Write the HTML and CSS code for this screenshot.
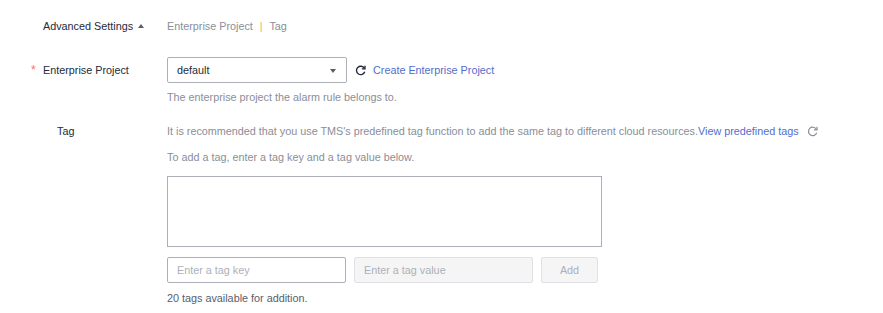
FILE: index.html
```html
<!DOCTYPE html>
<html>
<head>
<meta charset="utf-8">
<link rel="stylesheet" href="styles.css">
</head>
<body>
<div class="form">
  <div class="row adv">
    <div class="label adv-label">Advanced Settings <span class="caret-up"></span></div>
    <div class="content adv-summary">Enterprise Project <span class="sep">|</span> Tag</div>
  </div>

  <div class="row ep">
    <div class="label"><span class="star">*</span>Enterprise Project</div>
    <div class="content">
      <div class="line">
        <div class="select">default<span class="caret-down"></span></div>
        <svg class="refresh" width="11" height="11" viewBox="0 0 12 12"><path d="M10.2 3.6A4.6 4.6 0 1 0 10.6 7.4" fill="none" stroke="#252b3a" stroke-width="1.5"/><path d="M10.9 0.8V4.2H7.5" fill="none" stroke="#252b3a" stroke-width="1.5"/></svg>
        <a class="link create">Create Enterprise Project</a>
      </div>
      <div class="help">The enterprise project the alarm rule belongs to.</div>
    </div>
  </div>

  <div class="row tag">
    <div class="label tag-label">Tag</div>
    <div class="content">
      <div class="tip"><span>It is recommended that you use TMS's predefined tag function to add the same tag to different cloud resources.<a class="link">View predefined tags</a></span><svg class="refresh r2" width="11" height="11" viewBox="0 0 12 12"><path d="M10.2 3.6A4.6 4.6 0 1 0 10.6 7.4" fill="none" stroke="#8a8e99" stroke-width="1.3"/><path d="M10.9 0.8V4.2H7.5" fill="none" stroke="#8a8e99" stroke-width="1.3"/></svg></div>
      <div class="tip2">To add a tag, enter a tag key and a tag value below.</div>
      <div class="tagbox"></div>
      <div class="inputs">
        <div class="input key">Enter a tag key</div>
        <div class="input val">Enter a tag value</div>
        <div class="btn">Add</div>
      </div>
      <div class="count">20 tags available for addition.</div>
    </div>
  </div>
</div>
</body>
</html>
```
FILE: styles.css
```css
* { box-sizing: border-box; }
body {
  margin: 0;
  background: #fff;
  font-family: "Liberation Sans", Arial, sans-serif;
  font-size: 10.8px;
  color: #252b3a;
}
.form { padding-left: 31px; }
.row { display: flex; }
.label { width: 136px; flex: none; line-height: 16px; }
.content { flex: 1; line-height: 16px; }

.adv { margin-top: 18px; }
.adv-label { padding-left: 12px; color: #252b3a; }
.caret-up {
  display: inline-block;
  width: 0; height: 0;
  border-left: 3px solid transparent;
  border-right: 3px solid transparent;
  border-bottom: 4px solid #575d6c;
  vertical-align: 2px;
  margin-left: 2px;
}
.adv-summary { color: #8a8e99; }
.sep { color: #f2a86f; margin: 0 4px; }

.ep { margin-top: 23px; }
.ep .label { padding-top: 5px; }
.star { color: #f66f6a; margin-right: 4px; display: inline-block; width: 8px; font-size: 12px; }
.line { display: flex; align-items: center; height: 26px; }
.select {
  width: 180px; height: 26px;
  border: 1px solid #adb0b8;
  border-radius: 2px;
  padding: 0 9px;
  line-height: 24px;
  color: #252b3a;
  position: relative;
}
.caret-down {
  position: absolute;
  right: 10px; top: 11px;
  width: 0; height: 0;
  border-left: 3px solid transparent;
  border-right: 3px solid transparent;
  border-top: 4px solid #575d6c;
}
.refresh { margin-left: 8px; flex: none; }
.link { color: #526ecc; text-decoration: none; }
.create { margin-left: 7px; }
.help { color: #8a8e99; margin-top: 6px; }

.tag { margin-top: 18px; }
.tag-label { padding-left: 26px; }
.tip { color: #8a8e99; display: flex; align-items: center; white-space: nowrap; }
.r2 { margin-left: 8px; }
.tip2 { color: #8a8e99; margin-top: 10px; }
.tagbox {
  width: 435px; height: 71px;
  border: 1px solid #adb0b8;
  margin-top: 11px;
}
.inputs { display: flex; gap: 8px; margin-top: 10px; }
.input {
  width: 179px; height: 26px;
  border: 1px solid #adb0b8;
  border-radius: 2px;
  padding: 0 9px;
  line-height: 24px;
  color: #adb0b8;
}
.input.val { background: #f5f5f6; border-color: #dfe1e6; }
.btn {
  width: 57px; height: 26px;
  border: 1px solid #dfe1e6;
  border-radius: 2px;
  background: #f5f5f6;
  color: #adb0b8;
  text-align: center;
  line-height: 24px;
}
.count { color: #575d6c; margin-top: 7px; }
```
